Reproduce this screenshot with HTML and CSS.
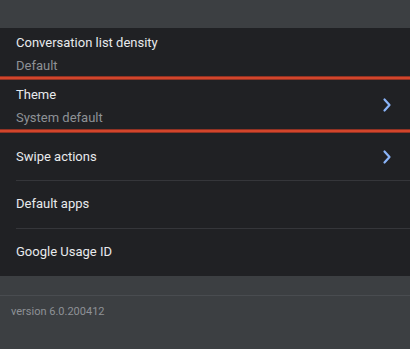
FILE: index.html
```html
<!DOCTYPE html>
<html lang="en">
<head>
    <meta charset="UTF-8">
    <meta name="viewport" content="width=device-width, initial-scale=1.0">
    <title>Settings</title>
    <link rel="stylesheet" href="styles.css">
</head>
<body>

<div class="top-bar"></div>

<div class="settings-list">
    <div class="setting-item two-line first">
        <div class="setting-text">
            <div class="setting-title">Conversation list density</div>
            <div class="setting-sub">Default</div>
        </div>
    </div>
    <div class="highlight-line"></div>

    <div class="setting-item two-line second">
        <div class="setting-text">
            <div class="setting-title">Theme</div>
            <div class="setting-sub">System default</div>
        </div>
        <svg class="chevron" width="12" height="16" viewBox="0 0 12 16">
            <path d="M3.5 2.5 L8.5 8 L3.5 13.5" fill="none" stroke="#8ab4f8" stroke-width="2.2" stroke-linecap="round" stroke-linejoin="round"/>
        </svg>
    </div>
    <div class="highlight-line"></div>

    <div class="setting-item single short">
        <div class="setting-title">Swipe actions</div>
        <svg class="chevron" width="12" height="16" viewBox="0 0 12 16">
            <path d="M3.5 2.5 L8.5 8 L3.5 13.5" fill="none" stroke="#8ab4f8" stroke-width="2.2" stroke-linecap="round" stroke-linejoin="round"/>
        </svg>
    </div>

    <div class="setting-item single divided">
        <div class="setting-title">Default apps</div>
    </div>

    <div class="setting-item single divided">
        <div class="setting-title">Google Usage ID</div>
    </div>
</div>

<footer>
    <div class="footer-gap"></div>
    <p class="version">version 6.0.200412</p>
</footer>

</body>
</html>
```

FILE: styles.css
```css
body {
    font-family: Roboto, "Noto Sans", Arial, sans-serif;
    margin: 0;
    padding: 0;
    background-color: #3c3f42;
    width: 410px;
    height: 349px;
    overflow: hidden;
}
.top-bar {
    height: 28px;
    background-color: #3c3f42;
}
.settings-list {
    background-color: #202124;
}
.setting-item {
    display: flex;
    align-items: center;
    justify-content: space-between;
    padding: 0 17px 0 16px;
    box-sizing: border-box;
}
.setting-item.first {
    height: 48px;
}
.setting-item.second {
    height: 49px;
}
.two-line {
    align-items: flex-start;
    padding-top: 5px;
}
.two-line .chevron {
    align-self: center;
    margin-top: -5px;
}
.setting-title {
    color: #e8eaed;
    font-size: 13px;
    line-height: 20px;
}
.setting-sub {
    color: #8e9196;
    font-size: 13px;
    line-height: 26px;
}
.single {
    height: 48px;
}
.single.short {
    height: 47px;
}
.divided {
    position: relative;
}
.divided::before {
    content: "";
    position: absolute;
    top: 0;
    left: 16px;
    right: 0;
    height: 1px;
    background-color: #35363a;
}
.highlight-line {
    height: 4px;
    background-color: #d2452b;
    box-shadow: inset 0 1px 0 #8f3224, inset 0 -1px 0 #8f3224;
}
.chevron {
    display: block;
}
footer {
    background-color: #3c3f42;
}
.footer-gap {
    height: 19px;
    border-bottom: 1px solid #494c50;
}
.version {
    margin: 0;
    padding: 9px 11px;
    color: #8e9196;
    font-size: 11px;
    line-height: 14px;
}
```
